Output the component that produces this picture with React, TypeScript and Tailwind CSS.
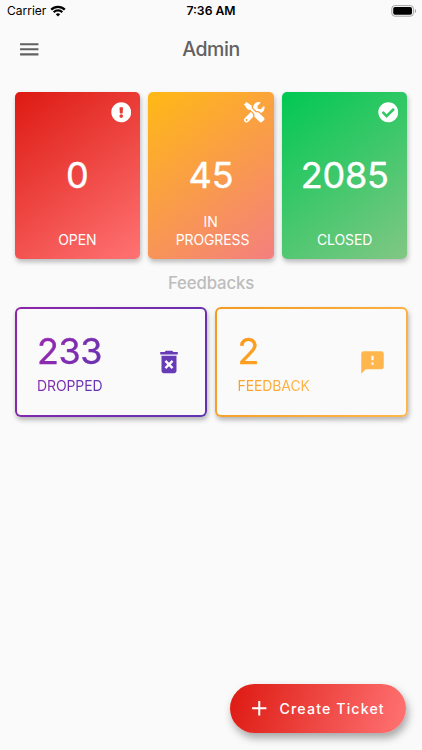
import type { ReactNode } from "react";
import { FaCheckCircle, FaExclamationCircle, FaTools } from "react-icons/fa";
import { MdAdd, MdDeleteForever, MdFeedback, MdMenu } from "react-icons/md";

const tickets = [
  {
    label: "OPEN",
    count: 0,
    icon: FaExclamationCircle,
    gradient: "bg-[linear-gradient(143deg,#dd1a12,#ff7373)]",
  },
  {
    label: "IN PROGRESS",
    count: 45,
    icon: FaTools,
    gradient: "bg-[linear-gradient(143deg,#ffb914,#f47f7f)]",
    labelClass: "ml-[3px]",
  },
  {
    label: "CLOSED",
    count: 2085,
    icon: FaCheckCircle,
    gradient: "bg-[linear-gradient(143deg,#00c853,#81c784)]",
  },
];

export default function App() {
  return (
    <div className="flex h-[750px] w-[422px] flex-col overflow-hidden bg-[#fafafa] font-[Inter,'Liberation_Sans',sans-serif]">
      <StatusBar />

      {/* APP BAR */}
      <header className="grid h-[56px] grid-cols-[1fr_auto_1fr] items-center px-[16.5px]">
        <button aria-label="Menu" className="w-fit">
          <MdMenu className="h-[24.5px] w-[24.5px] text-[#616161]" />
        </button>
        <h1 className="pt-[2px] text-[19.5px] font-medium tracking-[-0.4px] text-[#616161]">Admin</h1>
      </header>

      {/* TICKETS */}
      <section className="mt-[15px] grid grid-cols-3 gap-2 px-[14.5px]">
        {tickets.map(({ label, count, icon: Icon, gradient, labelClass = "" }) => (
          <div
            key={label}
            className={`flex h-[167px] flex-col items-center rounded-[5px] text-white shadow-[1px_3px_5px_rgba(0,0,0,0.26)] ${gradient}`}
          >
            <Icon className="mt-[10px] mr-[9px] h-[20.5px] w-[20.5px] self-end" />
            <p className="mt-[30px] text-[36px] leading-[44px] tracking-[-0.2px] [-webkit-text-stroke:0.4px]">
              {count}
            </p>
            <p
              className={`mt-auto mb-[11px] w-[90px] text-center text-[14px] leading-[17.5px] tracking-[-0.1px] whitespace-break-spaces ${labelClass}`}
            >
              {label}
            </p>
          </div>
        ))}
      </section>

      <h2 className="mt-[14px] text-center text-[16.8px] leading-[21px] font-medium tracking-[-0.15px] text-[#bdbdbd]">
        Feedbacks
      </h2>

      {/* FEEDBACKS */}
      <section className="mt-[13px] grid grid-cols-2 gap-2 px-[14.5px]">
        <FeedbackCard
          count={233}
          label="DROPPED"
          border="bg-[linear-gradient(119.6deg,#8e24aa,#5e35b1)]"
          text="bg-[linear-gradient(119.6deg,#9c27b0,#5e35b1)]"
        >
          <MdDeleteForever className="mr-[21px] h-[30px] w-[30px] text-[#673ab7]" />
        </FeedbackCard>
        <FeedbackCard
          count={2}
          label="FEEDBACK"
          border="bg-[linear-gradient(119.6deg,#f39a1e,#ffb74d)]"
          text="bg-[linear-gradient(119.6deg,#fb9610,#ffb74d)]"
        >
          <MdFeedback className="mr-[20px] h-[27px] w-[27px] text-[#ffb74d]" />
        </FeedbackCard>
      </section>

      <button className="mt-auto mr-[16.5px] mb-[17px] flex h-[49px] w-[175.5px] items-center self-end rounded-full bg-[linear-gradient(105.6deg,#dd1a12,#ff7373)] pl-[16.5px] text-white shadow-[2px_5px_8px_rgba(0,0,0,0.34)]">
        <MdAdd className="h-[24.5px] w-[24.5px]" />
        <span className="ml-[8.5px] text-[14.2px] font-medium tracking-[1.12px]">Create Ticket</span>
      </button>
    </div>
  );
}

function FeedbackCard({
  count,
  label,
  border,
  text,
  children,
}: {
  count: number;
  label: string;
  border: string;
  text: string;
  children: ReactNode;
}) {
  return (
    <div className={`h-[110px] rounded-[6px] p-[2px] shadow-[1px_3px_5px_rgba(0,0,0,0.28)] ${border}`}>
      <div className="flex h-full items-center justify-between rounded-[4px] bg-[#fafafa] pl-[20.5px]">
        <div className={`bg-clip-text text-transparent ${text}`}>
          <p className="text-[36px] leading-[44px] tracking-[-0.5px] [-webkit-text-stroke:0.4px]">{count}</p>
          <p className="mt-[4px] text-[14px] leading-[18px] tracking-[-0.1px]">{label}</p>
        </div>
        {children}
      </div>
    </div>
  );
}

function StatusBar() {
  return (
    <div className="grid h-[21px] grid-cols-3 items-center pr-[5px] pl-[7px] text-[12px] text-black">
      <div className="flex items-center gap-[4px]">
        <span>Carrier</span>
        <svg viewBox="0 0 16 12" className="h-[12px] w-[16px]" fill="none" stroke="currentColor" strokeWidth="2.2">
          <path d="M1.2 4.6a9.6 9.6 0 0 1 13.6 0" />
          <path d="M3.7 7.2a6.1 6.1 0 0 1 8.6 0" />
          <path d="M8 11.6 5.8 9.3a3.1 3.1 0 0 1 4.4 0z" fill="currentColor" stroke="none" />
        </svg>
      </div>
      <span className="pt-px pr-[2px] text-center text-[12.2px] font-semibold">7:36 AM</span>
      <svg viewBox="0 0 26 12" className="h-[12px] w-[26px] justify-self-end">
        <rect x="0.8" y="0.6" width="21.6" height="10.6" rx="3" fill="none" stroke="#a3a3a3" />
        <rect x="2.2" y="2" width="18.8" height="7.8" rx="1.8" fill="#000" />
        <path d="M23.8 4v4c.8-.3 1.3-1.1 1.3-2s-.5-1.7-1.3-2z" fill="#a3a3a3" />
      </svg>
    </div>
  );
}
